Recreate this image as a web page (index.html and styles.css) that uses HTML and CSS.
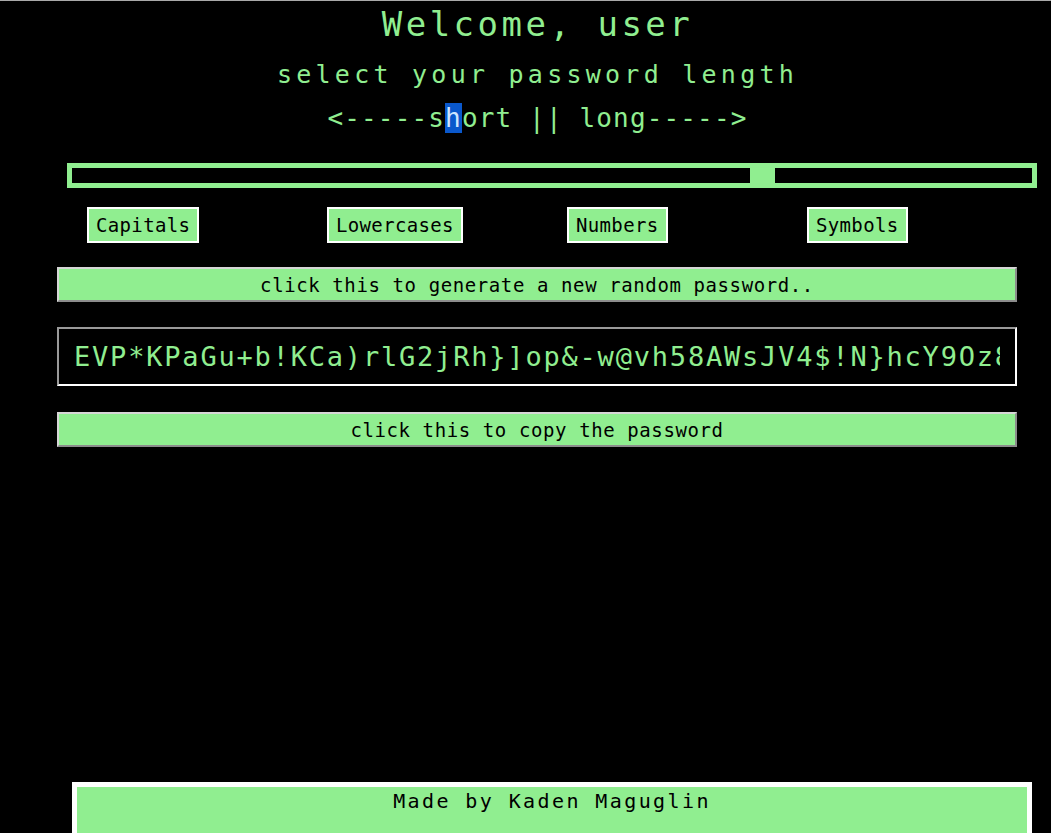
FILE: index.html
```html
<!DOCTYPE html>
<html lang="en">
<head>
<meta charset="utf-8">
<title>Password Generator</title>
<link rel="stylesheet" href="styles.css">
</head>
<body>
<header class="intro">
  <h1 class="title">Welcome, user</h1>
  <h2 class="subtitle">select your password length</h2>
  <p class="hint">&lt;-----s<span class="sel">h</span>ort || long-----&gt;</p>
</header>
<main class="generator">
  <input class="length" type="range" min="8" max="128" value="95" aria-label="password length">
  <div class="options">
    <label class="option"><input class="check" type="checkbox">Capitals</label>
    <label class="option"><input class="check" type="checkbox">Lowercases</label>
    <label class="option"><input class="check" type="checkbox">Numbers</label>
    <label class="option"><input class="check" type="checkbox">Symbols</label>
  </div>
  <button class="action action-generate" type="button">click this to generate a new random password..</button>
  <input class="output" type="text" readonly value="EVP*KPaGu+b!KCa)rlG2jRh}]op&amp;-w@vh58AWsJV4$!N}hcY9Oz8Qx">
  <button class="action action-copy" type="button">click this to copy the password</button>
</main>
<footer class="credit">Made by Kaden Maguglin</footer>
</body>
</html>
```
FILE: styles.css
```css
html {
  background: #000;
}
body {
  margin: 0;
  background: #000;
  border-top: 1px solid #a9a9a9;
  font-family: "DejaVu Sans Mono", "Liberation Mono", monospace;
  color: #90ee90;
}
.intro {
  padding-left: 24px;
  text-align: center;
}
.title {
  margin: 0;
  font-size: 34px;
  line-height: 46px;
  font-weight: normal;
  letter-spacing: 3.5px;
}
.subtitle {
  margin: 10px 0 0;
  font-size: 25px;
  line-height: 36px;
  font-weight: normal;
  letter-spacing: 4.25px;
}
.hint {
  margin: 9px 0 0;
  font-size: 26px;
  line-height: 32px;
  letter-spacing: 1.15px;
}
.sel {
  background: #0a58cc;
  color: #cfe6ff;
}
.generator {
  display: flex;
  flex-direction: column;
}
.length {
  -webkit-appearance: none;
  appearance: none;
  box-sizing: border-box;
  height: 25px;
  margin: 29px 14px 0 67px;
  padding: 0;
  border: 5px solid #90ee90;
  background: #000;
  outline: none;
}
.length::-webkit-slider-runnable-track {
  height: 15px;
  background: transparent;
}
.length::-webkit-slider-thumb {
  -webkit-appearance: none;
  appearance: none;
  width: 25px;
  height: 15px;
  border: none;
  background: #90ee90;
}
.options {
  display: grid;
  grid-template-columns: repeat(4, 240px);
  justify-items: start;
  margin-top: 19px;
  padding-left: 87px;
}
.option {
  box-sizing: border-box;
  height: 36px;
  padding: 0 7px;
  border: 2px solid #fff;
  background: #90ee90;
  color: #000;
  font-size: 19px;
  line-height: 32px;
  letter-spacing: 0.35px;
}
.check {
  display: none;
}
.action {
  box-sizing: border-box;
  height: 35px;
  margin: 24px 34px 0 57px;
  padding: 0;
  border: 2px solid;
  border-color: #d6d6d6 #8c8c8c #8c8c8c #d6d6d6;
  background: #90ee90;
  color: #000;
  font-family: "DejaVu Sans Mono", "Liberation Mono", monospace;
  font-size: 19px;
  letter-spacing: 0.6px;
  text-align: center;
}
.action-copy {
  margin-top: 26px;
}
.output {
  box-sizing: border-box;
  height: 59px;
  margin: 25px 34px 0 57px;
  padding: 0 15px;
  border: 2px solid;
  border-color: #9a9a9a #fff #fff #9a9a9a;
  background: #000;
  color: #90ee90;
  font-family: "DejaVu Sans Mono", "Liberation Mono", monospace;
  font-size: 27px;
  letter-spacing: 1.8px;
  outline: none;
}
.credit {
  margin: 335px 19px 0 72px;
  padding: 0 0 24px;
  border: 5px solid #fff;
  border-bottom: none;
  background: #90ee90;
  color: #000;
  font-size: 20px;
  line-height: 28px;
  letter-spacing: 2.4px;
  text-align: center;
}
```
